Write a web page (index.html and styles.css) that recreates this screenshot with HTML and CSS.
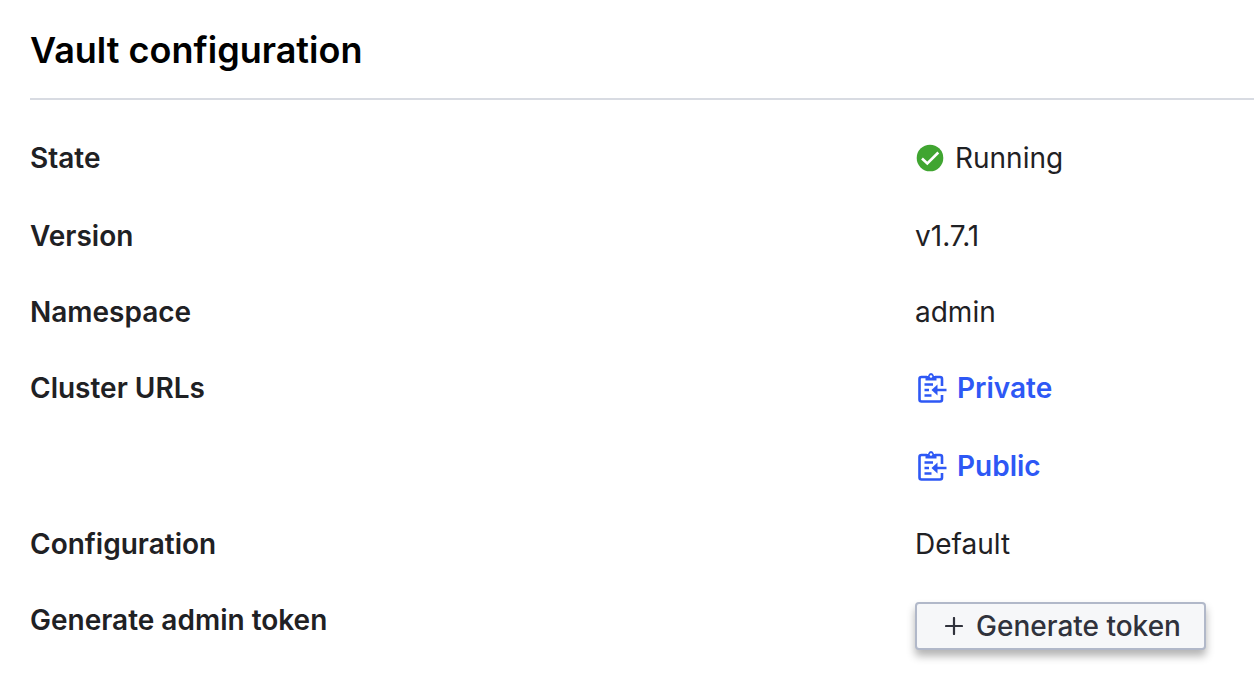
FILE: index.html
```html
<!DOCTYPE html>
<html lang="en">
<head>
<meta charset="utf-8">
<meta name="viewport" content="width=device-width, initial-scale=1">
<title>Vault configuration</title>
<link rel="stylesheet" href="styles.css">
</head>
<body>
<svg class="sprite" aria-hidden="true">
  <symbol id="copy" viewBox="0 0 30 32">
    <path d="M10 5H4.500Q2.500 5 2.500 7V27.500Q2.500 29.500 4.500 29.500H23Q25 29.500 25 27.500V23M25 14V7Q25 5 23 5H18" fill="none" stroke="currentColor" stroke-width="2.600"/>
    <path d="M8.500 8.500V5Q8.500 4 9.500 4H11Q11.800 1 14 1T17 4H18.500Q19.500 4 19.500 5V8.500Z" fill="currentColor"/>
    <circle cx="14" cy="4.500" r="1.300" fill="#fff"/>
    <path d="M7.500 12.500H16M7.500 18H12M7.500 23.500H14.500M20 18H29.500" fill="none" stroke="currentColor" stroke-width="2.400"/>
    <path d="M14.500 18L20.500 12.500V23.500Z" fill="currentColor"/>
  </symbol>
</svg>
<main class="page">
  <h1 class="title">Vault configuration</h1>
  <dl class="details">
    <div class="row">
      <dt class="label">State</dt>
      <dd class="value status">
        <svg class="status-icon" viewBox="0 0 28 28" aria-hidden="true"><circle cx="14" cy="14" r="13.300" fill="#40a531"/><path d="M6 14.500L11.300 19.500L22.300 8.500" fill="none" stroke="#fff" stroke-width="2.600"/></svg>
        Running
      </dd>
    </div>
    <div class="row">
      <dt class="label">Version</dt>
      <dd class="value">v1.7.1</dd>
    </div>
    <div class="row">
      <dt class="label">Namespace</dt>
      <dd class="value">admin</dd>
    </div>
    <div class="row">
      <dt class="label">Cluster URLs</dt>
      <dd class="value links">
        <button class="copy" type="button"><svg class="copy-icon" aria-hidden="true"><use href="#copy"/></svg>Private</button>
        <button class="copy" type="button"><svg class="copy-icon" aria-hidden="true"><use href="#copy"/></svg>Public</button>
      </dd>
    </div>
    <div class="row">
      <dt class="label">Configuration</dt>
      <dd class="value">Default</dd>
    </div>
    <div class="row">
      <dt class="label">Generate admin token</dt>
      <dd class="value">
        <button class="generate" type="button"><svg class="plus" viewBox="0 0 18 18" aria-hidden="true"><path d="M9 1V17M1 9H17" fill="none" stroke="currentColor" stroke-width="2.200" stroke-linecap="round"/></svg>Generate token</button>
      </dd>
    </div>
  </dl>
</main>
</body>
</html>
```
FILE: styles.css
```css
* { box-sizing: border-box; }
body {
  margin: 0;
  background: #fff;
  color: #1f2124;
  font-family: Inter, "Liberation Sans", sans-serif;
  font-size: 28px;
  line-height: 36px;
}
.sprite { position: absolute; width: 0; height: 0; }
.page { padding: 26px 0 20px 30px; }
.title {
  margin: 0;
  padding-bottom: 24px;
  border-bottom: 2px solid #d8dbe2;
  color: #000;
  font-size: 36px;
  font-weight: 600;
  line-height: 48px;
}
.details {
  display: flex;
  flex-direction: column;
  gap: 40px;
  margin: 0;
  padding-top: 40px;
}
.row {
  display: grid;
  grid-template-columns: 885fr 339fr;
  align-items: start;
}
.label { font-weight: 600; }
.value { margin: 0; }
.status {
  display: flex;
  align-items: center;
  gap: 11px;
  padding: 0 0 2px 1px;
}
.status-icon { width: 28px; height: 28px; }
.links {
  display: flex;
  flex-direction: column;
  align-items: flex-start;
  gap: 42px;
  padding-bottom: 2px;
}
.copy {
  display: flex;
  align-items: center;
  gap: 10px;
  margin: 0;
  padding: 0 0 0 2px;
  border: 0;
  background: none;
  color: #2e58f5;
  font: inherit;
  font-weight: 600;
  cursor: pointer;
}
.copy-icon { width: 30px; height: 32px; }
.generate {
  display: flex;
  align-items: center;
  gap: 13px;
  padding: 4px 23px 4px 28px;
  border: 2px solid #b1b8c9;
  border-radius: 4px;
  background: #f6f7f9;
  box-shadow: 0 6px 8px rgba(0, 0, 0, 0.3);
  color: #30323c;
  font: inherit;
  font-weight: 500;
  cursor: pointer;
}
.plus { width: 18px; height: 18px; }
```
